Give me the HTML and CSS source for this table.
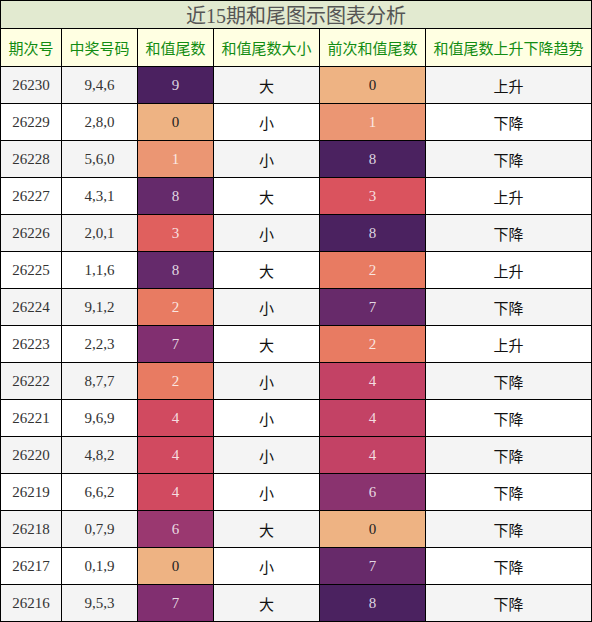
FILE: index.html
```html
<!doctype html>
<html lang="zh-CN">
<head>
<meta charset="UTF-8" />
<title>近15期和尾图示图表分析</title>
<link rel="stylesheet" href="styles.css">
</head>
<body>

<div class="chart">
	<div class="title">近15期和尾图示图表分析</div>

	<div class="head">期次号</div>
	<div class="head">中奖号码</div>
	<div class="head">和值尾数</div>
	<div class="head">和值尾数大小</div>
	<div class="head">前次和值尾数</div>
	<div class="head">和值尾数上升下降趋势</div>

	<div class="cell odd">26230</div><div class="cell odd">9,4,6</div><div class="cell heat c-49">9</div><div class="cell odd cn">大</div><div class="cell heat c-0 dark">0</div><div class="cell odd cn">上升</div>
	<div class="cell">26229</div><div class="cell">2,8,0</div><div class="cell heat c-0 dark">0</div><div class="cell cn">小</div><div class="cell heat c-1">1</div><div class="cell cn">下降</div>
	<div class="cell odd">26228</div><div class="cell odd">5,6,0</div><div class="cell heat c-1">1</div><div class="cell odd cn">小</div><div class="cell heat c-48">8</div><div class="cell odd cn">下降</div>
	<div class="cell">26227</div><div class="cell">4,3,1</div><div class="cell heat c-8">8</div><div class="cell cn">大</div><div class="cell heat c-3b">3</div><div class="cell cn">上升</div>
	<div class="cell odd">26226</div><div class="cell odd">2,0,1</div><div class="cell heat c-3">3</div><div class="cell odd cn">小</div><div class="cell heat c-48">8</div><div class="cell odd cn">下降</div>
	<div class="cell">26225</div><div class="cell">1,1,6</div><div class="cell heat c-8">8</div><div class="cell cn">大</div><div class="cell heat c-2">2</div><div class="cell cn">上升</div>
	<div class="cell odd">26224</div><div class="cell odd">9,1,2</div><div class="cell heat c-2">2</div><div class="cell odd cn">小</div><div class="cell heat c-7b">7</div><div class="cell odd cn">下降</div>
	<div class="cell">26223</div><div class="cell">2,2,3</div><div class="cell heat c-7">7</div><div class="cell cn">大</div><div class="cell heat c-2">2</div><div class="cell cn">上升</div>
	<div class="cell odd">26222</div><div class="cell odd">8,7,7</div><div class="cell heat c-2">2</div><div class="cell odd cn">小</div><div class="cell heat c-4b">4</div><div class="cell odd cn">下降</div>
	<div class="cell">26221</div><div class="cell">9,6,9</div><div class="cell heat c-4">4</div><div class="cell cn">小</div><div class="cell heat c-4b">4</div><div class="cell cn">下降</div>
	<div class="cell odd">26220</div><div class="cell odd">4,8,2</div><div class="cell heat c-4">4</div><div class="cell odd cn">小</div><div class="cell heat c-4b">4</div><div class="cell odd cn">下降</div>
	<div class="cell">26219</div><div class="cell">6,6,2</div><div class="cell heat c-4">4</div><div class="cell cn">小</div><div class="cell heat c-6b">6</div><div class="cell cn">下降</div>
	<div class="cell odd">26218</div><div class="cell odd">0,7,9</div><div class="cell heat c-6">6</div><div class="cell odd cn">大</div><div class="cell heat c-0 dark">0</div><div class="cell odd cn">下降</div>
	<div class="cell">26217</div><div class="cell">0,1,9</div><div class="cell heat c-0 dark">0</div><div class="cell cn">小</div><div class="cell heat c-7b">7</div><div class="cell cn">下降</div>
	<div class="cell odd">26216</div><div class="cell odd">9,5,3</div><div class="cell heat c-7">7</div><div class="cell odd cn">大</div><div class="cell heat c-48">8</div><div class="cell odd cn">下降</div>
</div>

</body>
</html>
```

FILE: styles.css
```css
html,body{margin:0;padding:0;}
body{
	font-family: "Liberation Serif", "Noto Sans CJK SC", serif;
	color: #333;
}

.chart{
	width: 592px;
	display: grid;
	grid-template-columns: 61px 76px 76px 106px 106px 166px;
	grid-template-rows: 28px 38px repeat(15, 37px);
	border-left: 1px solid #000;
	border-top: 1px solid #000;
	box-sizing: border-box;
}

.chart > div{
	border-right: 1px solid #000;
	border-bottom: 1px solid #000;
	box-sizing: border-box;
	display: flex;
	align-items: center;
	justify-content: center;
	white-space: nowrap;
}

.title{
	grid-column: 1 / -1;
	background-color: #e2ead0;
	color: #555;
	font-size: 20px;
}

.head{
	background-color: #ffffe2;
	color: #128c12;
	font-size: 15px;
	font-family: "Noto Sans CJK SC", sans-serif;
}

.cell{
	background-color: #fff;
	font-size: 15px;
	padding-top: 1px;
}
.cell.odd{ background-color: #f4f4f4; }
.cell.cn{
	font-family: "Noto Sans CJK SC", sans-serif;
	color: #111;
	padding-top: 0;
}

/* 热力色块 */
.heat{ color: rgba(255,255,255,.82); }
.heat.dark{ color: #222; }
.c-0{ background-color: #eeb383; }
.c-1{ background-color: #eb9673; }
.c-2{ background-color: #e87b62; }
.c-3{ background-color: #e0605e; }
.c-3b{ background-color: #da535e; }
.c-4{ background-color: #d14a60; }
.c-4b{ background-color: #c34265; }
.c-6{ background-color: #9a3870; }
.c-6b{ background-color: #8a336f; }
.c-7{ background-color: #812f70; }
.c-7b{ background-color: #672a6a; }
.c-8{ background-color: #652a6b; }
.c-48{ background-color: #4b2260; }
.c-49{ background-color: #4b2160; }
```
